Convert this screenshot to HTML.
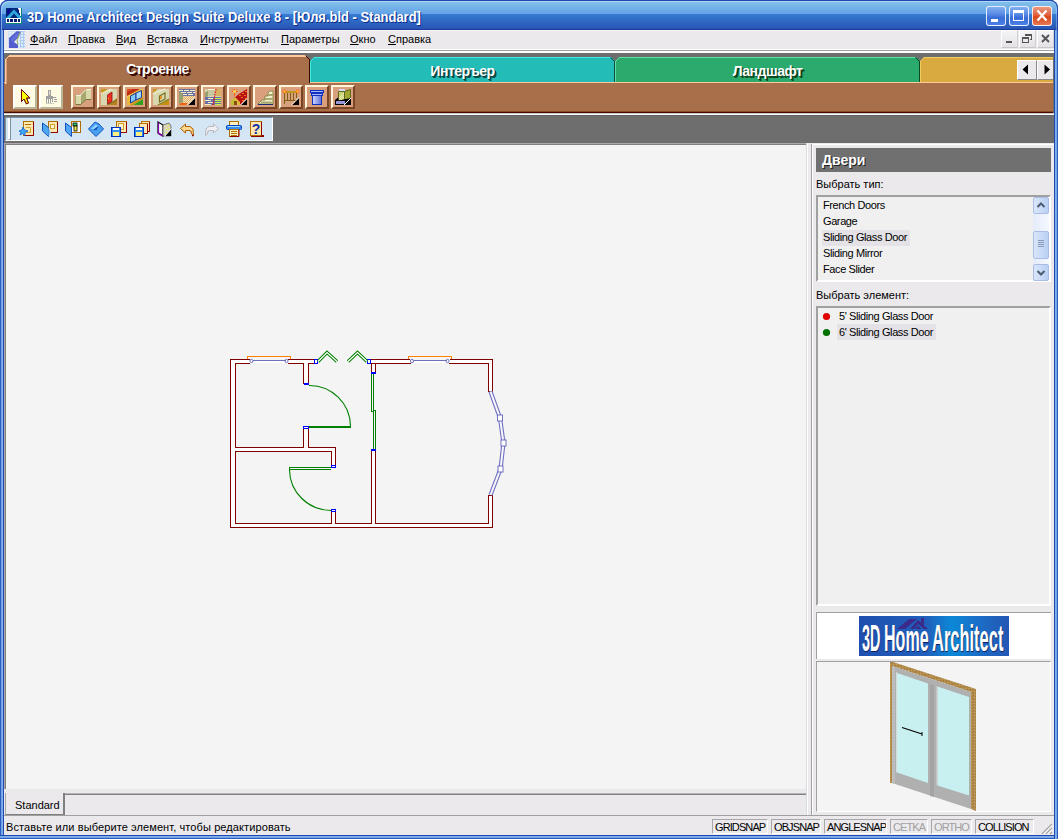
<!DOCTYPE html><html><head><meta charset="utf-8"><style>
*{margin:0;padding:0;box-sizing:border-box}
html,body{width:1058px;height:839px;overflow:hidden;background:#fff}
body{position:relative;font-family:"Liberation Sans",sans-serif;font-size:11px;color:#000;line-height:13px}
.a{position:absolute}
svg{position:absolute;overflow:visible}
.t{white-space:nowrap}
.mi u{text-decoration:underline;text-underline-offset:1px}
.wb{width:20px;height:20px;border-radius:3px;border:1px solid rgba(255,255,255,.85)}
.mdi{width:17px;height:18px;background:linear-gradient(#f4f3f5,#e4e2e6);border:1px solid #fff;border-right-color:#d2d0d4;border-bottom-color:#c8c6ca}
.tabtxt{font-size:14px;line-height:16px;letter-spacing:-0.5px;font-weight:bold;color:#fff;white-space:nowrap;text-align:center}
.bb{width:24px;height:24px;background:#d9a07e;border:2px solid;border-color:#fff5dc #7a4524 #7a4524 #fff5dc}
.bc{width:24px;height:24px;background:#fffbe2;border:2px solid;border-color:#ffffff #b8b498 #b8b498 #ffffff}
.li{left:823px;white-space:nowrap;letter-spacing:-0.4px}
.sp{height:15px;border:1px solid;border-color:#a7a6aa #fff #fff #a7a6aa;white-space:nowrap;padding-left:2px;padding-top:1px;line-height:13px;letter-spacing:-0.9px;overflow:hidden}
</style></head><body>
<div class="a" style="left:0;top:0;width:1058px;height:839px;background:#2a52be;border-radius:8px 8px 0 0"></div>
<div class="a" style="left:0;top:0;width:1058px;height:30px;border-radius:8px 8px 0 0;background:linear-gradient(to bottom,#1f3fa0 0,#1f3fa0 1px,#98ccf2 1px,#82c0ea 2px,#64a2e6 14px,#3a80d4 14px,#3579cf 15px,#2855b5 29px,#1a3a98 29px,#1a3a98 30px)"></div>
<div class="a" style="left:0;top:0;width:1058px;height:30px;border-radius:8px 8px 0 0;border:1px solid #2046b0;border-bottom:0;box-shadow:inset 1px 1px 0 rgba(200,230,255,.55), inset -1px 0 0 rgba(200,230,255,.35)"></div>
<div class="a" style="left:0;top:30px;width:4px;height:809px;background:linear-gradient(to right,#2d5bc4 0,#2d5bc4 1px,#6c9ee0 1px,#86b6ee 3px,#2148b0 3px)"></div>
<div class="a" style="left:0;top:835px;width:1058px;height:4px;background:linear-gradient(#2148b0 0,#2148b0 1px,#86b6ee 1px,#6c9ee0 3px,#2d5bc4 3px)"></div>
<svg style="left:6px;top:8px" width="16" height="16" shape-rendering="crispEdges">
<rect width="16" height="16" fill="#088878"/><rect width="15" height="15" fill="#002a78"/>
<polygon points="12,0 15,0 15,10" fill="#fff"/><rect x="12" y="0" width="3" height="3" fill="#fff"/>
<polygon points="0,10 8,1.5 16,10 12,10 8,5.5 4,10" fill="#2ca8dc" shape-rendering="auto"/>
<polygon points="1,3 5,0 2,7" fill="#0000a0" shape-rendering="auto"/>
<polygon points="11,3 13,1 13,6" fill="#001880" shape-rendering="auto"/>
<rect x="0" y="10" width="15" height="5" fill="#fff"/>
<g fill="#001a70"><rect x="1" y="11" width="2" height="3"/><rect x="4" y="11" width="3" height="3"/><rect x="8" y="11" width="3" height="3"/><rect x="12" y="11" width="2" height="3"/></g>
<rect x="0" y="15" width="16" height="1" fill="#088878"/>
</svg>
<div class="a t" style="left:27px;top:9px;font-size:14px;line-height:16px;font-weight:bold;color:#fff;text-shadow:1px 1px 0 #0c2a8a;transform:scaleX(0.925);transform-origin:0 0">3D Home Architect Design Suite Deluxe 8 - [Юля.bld - Standard]</div>
<div class="a wb" style="left:986px;top:6px;background:linear-gradient(#82aef0,#5a8ae6 40%,#3a6cd6 60%,#4a80e8)"></div>
<div class="a" style="left:991px;top:19px;width:7px;height:3px;background:#fff"></div>
<div class="a wb" style="left:1009px;top:6px;background:linear-gradient(#82aef0,#5a8ae6 40%,#3a6cd6 60%,#4a80e8)"></div>
<div class="a" style="left:1013px;top:10px;width:11px;height:11px;border:1px solid #fff;border-top-width:3px"></div>
<div class="a wb" style="left:1032px;top:6px;background:linear-gradient(#e89a80,#e06040 45%,#d84818 55%,#e87858)"></div>
<svg style="left:1032px;top:6px" width="20" height="20"><path d="M5.5 4.5 L14.5 14.5 M14.5 4.5 L5.5 14.5" stroke="#fff" stroke-width="2.2"/></svg>
<div class="a" style="left:4px;top:30px;width:1050px;height:19px;background:#ebe9ec;border-top:1px solid #f7f5f5"></div>
<div class="a" style="left:4px;top:49px;width:1050px;height:1px;background:#fff"></div>
<div class="a" style="left:4px;top:50px;width:1050px;height:1px;background:#a0a0a0"></div>
<div class="a" style="left:4px;top:51px;width:1050px;height:2px;background:#fff"></div>
<svg style="left:8px;top:31px" width="17" height="17" shape-rendering="crispEdges">
<rect width="17" height="17" fill="#dde8f6"/>
<g fill="#a8ccf4"><rect x="0" y="0" width="1" height="17"/><rect x="3" y="0" width="1" height="17"/><rect x="6" y="0" width="1" height="17"/><rect x="9" y="0" width="1" height="17"/><rect x="12" y="0" width="1" height="17"/><rect x="15" y="0" width="1" height="17"/>
<rect x="0" y="0" width="17" height="1"/><rect x="0" y="3" width="17" height="1"/><rect x="0" y="6" width="17" height="1"/><rect x="0" y="9" width="17" height="1"/><rect x="0" y="12" width="17" height="1"/><rect x="0" y="15" width="17" height="1"/></g>
<rect x="0" y="0" width="12" height="17" fill="#f0f4fc" opacity="0.5"/>
<polygon points="1,7 9,0 13,1 10,7 6,11 10,14 10,17 1,17" fill="#4850c8" opacity="0.92" shape-rendering="auto"/>
<polygon points="3,8 9,2 11,3 8,8 4,11" fill="#6a78e0" opacity="0.8" shape-rendering="auto"/>
<polygon points="6,11 10,7 11,13" fill="#e8ecff" shape-rendering="auto"/>
<path d="M12.5 0.5 L9 9 L10 14" stroke="#98b060" stroke-width="1" fill="none" shape-rendering="auto"/>
</svg>
<div class="a t mi" style="left:30px;top:33px"><u>Ф</u>айл</div>
<div class="a t mi" style="left:68px;top:33px"><u>П</u>равка</div>
<div class="a t mi" style="left:116px;top:33px"><u>В</u>ид</div>
<div class="a t mi" style="left:147px;top:33px"><u>В</u>ставка</div>
<div class="a t mi" style="left:200px;top:33px"><u>И</u>нструменты</div>
<div class="a t mi" style="left:281px;top:33px"><u>П</u>араметры</div>
<div class="a t mi" style="left:350px;top:33px"><u>О</u>кно</div>
<div class="a t mi" style="left:388px;top:33px"><u>С</u>правка</div>
<div class="a mdi" style="left:1001px;top:30px"></div><div class="a" style="left:1006px;top:41px;width:6px;height:2px;background:#555"></div>
<div class="a mdi" style="left:1019px;top:30px"></div>
<svg style="left:1019px;top:30px" width="17" height="18" shape-rendering="crispEdges"><path d="M6.5 4.5h6v5h-2 M6.5 4.5v1.5 M3.5 7.5h6v5h-6z" stroke="#555" fill="none"/><rect x="6" y="4" width="7" height="2" fill="#555"/><rect x="3" y="7" width="7" height="2" fill="#555"/></svg>
<div class="a mdi" style="left:1037px;top:30px"></div>
<svg style="left:1037px;top:30px" width="17" height="18"><path d="M5 5 L12 12 M12 5 L5 12" stroke="#555" stroke-width="2"/></svg>
<div class="a" style="left:4px;top:53px;width:1050px;height:90px;background:#6e6e6e"></div>
<div class="a" style="left:4px;top:82px;width:1049px;height:31px;background:#a8704a;border-top:1px solid #ffc89a"></div>
<div class="a" style="left:4px;top:111px;width:1049px;height:1px;background:#8a4a20"></div>
<div class="a" style="left:4px;top:112px;width:1049px;height:1px;background:#4a0a00"></div>
<svg style="left:310px;top:57px" width="305" height="25" shape-rendering="crispEdges"><polygon points="0,4 4,0 301,0 305,4 305,25 0,25" fill="#24bcb6" shape-rendering="auto"/><rect x="4" y="0" width="297" height="1" fill="#40e8e4"/><rect x="0" y="4" width="1" height="21" fill="#40e8e4"/><path d="M0.5 4.5 L4.5 0.5" stroke="#40e8e4" shape-rendering="auto"/><rect x="304" y="4" width="1" height="21" fill="#0a4a48"/><path d="M300.5 0.5 L304.5 4.5" stroke="#0a4a48" shape-rendering="auto"/></svg>
<div class="a tabtxt" style="left:310px;top:63px;width:305px;text-shadow:1px 1px 0 #0a4a48,2px 2px 0 #0a4a48">Интеръер</div>
<svg style="left:615px;top:57px" width="305" height="25" shape-rendering="crispEdges"><polygon points="0,4 4,0 301,0 305,4 305,25 0,25" fill="#2aaa6c" shape-rendering="auto"/><rect x="4" y="0" width="297" height="1" fill="#60e0a0"/><rect x="0" y="4" width="1" height="21" fill="#60e0a0"/><path d="M0.5 4.5 L4.5 0.5" stroke="#60e0a0" shape-rendering="auto"/><rect x="304" y="4" width="1" height="21" fill="#0a4a20"/><path d="M300.5 0.5 L304.5 4.5" stroke="#0a4a20" shape-rendering="auto"/></svg>
<div class="a tabtxt" style="left:615px;top:63px;width:305px;text-shadow:1px 1px 0 #0a4a20,2px 2px 0 #0a4a20">Ландшафт</div>
<svg style="left:920px;top:57px" width="142" height="25" shape-rendering="crispEdges"><polygon points="0,4 4,0 138,0 142,4 142,25 0,25" fill="#d8aa40" shape-rendering="auto"/><rect x="4" y="0" width="134" height="1" fill="#f0cc60"/><rect x="0" y="4" width="1" height="21" fill="#f0cc60"/><path d="M0.5 4.5 L4.5 0.5" stroke="#f0cc60" shape-rendering="auto"/><rect x="141" y="4" width="1" height="21" fill="#7a5a10"/><path d="M137.5 0.5 L141.5 4.5" stroke="#7a5a10" shape-rendering="auto"/></svg>
<div class="a tabtxt" style="left:920px;top:63px;width:142px;text-shadow:1px 1px 0 #7a5a10,2px 2px 0 #7a5a10"></div>
<svg style="left:5px;top:55px" width="306" height="29" shape-rendering="crispEdges">
<polygon points="0,4 4,0 301,0 305,4 305,29 0,29" fill="#a8704a" shape-rendering="auto"/>
<rect x="4" y="0" width="297" height="2" fill="#ffc89a"/>
<rect x="0" y="4" width="2" height="25" fill="#ffc89a"/><rect x="1" y="4" width="1" height="25" fill="#d8a078"/>
<path d="M0.5 4.5 L4.5 0.5" stroke="#ffc89a" shape-rendering="auto"/>
<rect x="304" y="4" width="1" height="24" fill="#3a0a00"/>
<path d="M300.5 0.5 L304.5 4.5" stroke="#3a0a00" shape-rendering="auto"/>
</svg>
<div class="a tabtxt" style="left:5px;top:61px;width:305px;text-shadow:1px 1px 0 #3a0800,2px 2px 0 #3a0800">Строение</div>
<div class="a" style="left:1017px;top:60px;width:20px;height:20px;background:#ebe9ec;border:1px solid;border-color:#fff #888 #888 #fff"></div>
<svg style="left:1017px;top:60px" width="20" height="20"><polygon points="11,4.5 11,14.5 5.5,9.5" fill="#000"/></svg>
<div class="a" style="left:1037px;top:60px;width:17px;height:20px;background:#ebe9ec;border:1px solid;border-color:#fff #888 #888 #fff"></div>
<svg style="left:1037px;top:60px" width="17" height="20"><polygon points="7.5,4.5 7.5,14.5 13,9.5" fill="#000"/></svg>
<div class="a" style="left:1053px;top:53px;width:1px;height:90px;background:#6e6e6e"></div>
<div class="a bc" style="left:13px;top:85px"></div>
<div class="a bc" style="left:39px;top:85px"></div>
<div class="a bb" style="left:71px;top:85px"></div>
<div class="a bb" style="left:97px;top:85px"></div>
<div class="a bb" style="left:123px;top:85px"></div>
<div class="a bb" style="left:149px;top:85px"></div>
<div class="a bb" style="left:175px;top:85px"></div>
<div class="a bb" style="left:201px;top:85px"></div>
<div class="a bb" style="left:227px;top:85px"></div>
<div class="a bb" style="left:253px;top:85px"></div>
<div class="a bb" style="left:279px;top:85px"></div>
<div class="a bb" style="left:305px;top:85px"></div>
<div class="a bb" style="left:331px;top:85px"></div>
<svg width="0" height="0" style="position:absolute"><defs><pattern id="chk" width="2" height="2" patternUnits="userSpaceOnUse"><rect width="1" height="1" fill="#fff"/><rect x="1" y="1" width="1" height="1" fill="#fff"/></pattern></defs></svg>
<svg style="left:17px;top:89px" width="16" height="16"><polygon points="4.5,0.5 4.5,12.5 7,10 9.5,15 11.5,14 9.5,9 13,9" fill="#ffff00" stroke="#000" stroke-width="1"/>
<polygon points="4.5,0.5 4.5,12.5 7,10 9.5,15 11.5,14 9.5,9 13,9" fill="none" stroke="#e00000" stroke-width="1" stroke-dasharray="1 1"/></svg>
<svg style="left:43px;top:89px" width="16" height="16"><g fill="#a0a0a0" shape-rendering="crispEdges">
<rect x="5" y="1" width="3" height="6"/><rect x="3" y="7" width="7" height="3"/><rect x="3" y="10" width="1" height="4"/><rect x="5" y="10" width="1" height="4"/><rect x="7" y="10" width="1" height="4"/><rect x="9" y="10" width="1" height="3"/>
<rect x="10" y="8" width="3" height="1"/><rect x="11" y="10" width="3" height="1"/><rect x="11" y="12" width="3" height="1"/><rect x="3" y="14" width="8" height="1" fill="#d0d0c8"/></g>
<rect x="6" y="2" width="1" height="4" fill="#e0e0d8"/></svg>
<svg style="left:75px;top:89px" width="16" height="16"><g shape-rendering="crispEdges">
<polygon points="5,6 11,0 11,10 5,16" fill="#a8a870"/>
<rect x="0" y="6" width="6" height="10" fill="#d8d8a8"/>
<rect x="11" y="0" width="5" height="11" fill="#d8d8a8"/>
<rect x="0" y="15" width="6" height="1" fill="#787840"/><rect x="0" y="6" width="1" height="10" fill="#a0a070"/>
<rect x="11" y="10" width="5" height="1" fill="#787840"/>
<rect x="1" y="6" width="5" height="1" fill="#f4f4d8"/><rect x="12" y="0" width="4" height="1" fill="#f4f4d8"/>
</g><path d="M5.5 6 L11 0.5" stroke="#f4f4d8" stroke-width="1"/><path d="M5.5 15.5 L11 10.5" stroke="#787840" stroke-width="1"/></svg>
<svg style="left:101px;top:89px" width="16" height="16"><rect width="16" height="16" fill="#d8d8b0"/>
<polygon points="0,0 7,0 0,5" fill="#c89820"/><polygon points="16,9 16,16 7,16" fill="#b88018"/>
<path d="M0 4.5 L11 0" stroke="#f4f4d8" stroke-width="1.4" stroke-dasharray="1.2 0.8"/>
<path d="M6 16 L16 11" stroke="#707030" stroke-width="1"/>
<polygon points="6.5,6 11,3 11,12.5 6.5,15" fill="#f03020" stroke="#901010" stroke-width="0.8"/>
<rect x="7" y="9" width="1" height="1" fill="#f0d000"/></svg>
<svg style="left:127px;top:89px" width="16" height="16"><rect width="16" height="16" fill="#e8b838"/>
<polygon points="0,0 13,0 0,7" fill="#c03010"/><polygon points="0,0 6,0 0,3" fill="#e05020"/>
<polygon points="16,10 16,16 6,16" fill="#30a020"/>
<path d="M0 8 L16 0" stroke="#f8e070" stroke-width="1.2" stroke-dasharray="1 1"/>
<path d="M4 16 L16 9" stroke="#c88810" stroke-width="1.2"/>
<polygon points="3.5,7 9,4 9,11 3.5,14" fill="#80c8f8" stroke="#203890" stroke-width="1"/>
<polygon points="9,4 14.5,1.5 14.5,8.5 9,11" fill="#a0d8ff" stroke="#203890" stroke-width="1"/></svg>
<svg style="left:153px;top:89px" width="16" height="16"><rect width="16" height="16" fill="#d8d8b0"/>
<polygon points="0,0 5,0 0,4" fill="#c89820"/><polygon points="16,10 16,16 6,16" fill="#c89010"/>
<path d="M0 5 L12 0" stroke="#f4f4d8" stroke-width="1.4" stroke-dasharray="1.2 0.8"/>
<path d="M5 16 L16 10" stroke="#808030" stroke-width="1.2"/>
<polygon points="6.5,7 12,4 12,10 6.5,13" fill="none" stroke="#787020" stroke-width="1.2"/>
<rect x="7" y="7" width="2" height="3" fill="#e89020"/></svg>
<svg style="left:179px;top:89px" width="16" height="16"><rect width="16" height="16" fill="#d8a880"/>
<rect x="0" y="0" width="16" height="7" fill="#6870a8"/>
<g fill="#f8f0c0" shape-rendering="crispEdges"><rect x="0" y="1" width="4" height="1"/><rect x="5" y="1" width="5" height="1"/><rect x="11" y="1" width="5" height="1"/>
<rect x="2" y="3" width="5" height="1"/><rect x="8" y="3" width="5" height="1"/><rect x="14" y="3" width="2" height="1"/>
<rect x="4" y="5" width="4" height="1"/><rect x="9" y="5" width="5" height="1"/></g>
<polygon points="0,2 4,5 4,13 0,15" fill="#98a070"/>
<polygon points="4,7 16,7 16,10 9,15 4,15" fill="#e0b060"/>
<rect x="4" y="7" width="12" height="8" fill="url(#chk)" opacity="0.6"/>
<polygon points="0,16 2,14 9,14 7,16" fill="#f06010"/>
<polygon points="16,9 16,16 9,16" fill="#000"/><path d="M8.5 16 L16 8.5" stroke="#fff" stroke-width="0.9"/></svg>
<svg style="left:205px;top:89px" width="16" height="16"><rect width="16" height="16" fill="#d8d8b0"/>
<polygon points="0,3 3,0 11,0 11,7 3,7 0,10" fill="#c8c8a0"/>
<polygon points="0,3 3,0 3,7 0,10" fill="#98a070"/>
<path d="M0.5 3 L3 0.5 H11" stroke="#f8f8e0" stroke-width="1" fill="none"/>
<rect x="11" y="0" width="5" height="7" fill="#d8b060"/>
<rect x="0" y="8" width="10" height="8" fill="#6870a8"/>
<g fill="#f8f0c0" shape-rendering="crispEdges"><rect x="3" y="9" width="5" height="1"/><rect x="0" y="11" width="6" height="1"/><rect x="3" y="13" width="5" height="1"/><rect x="0" y="15" width="6" height="1"/></g>
<rect x="10" y="8" width="6" height="8" fill="#6870a8"/>
<g fill="#c8f040" shape-rendering="crispEdges"><rect x="10" y="9" width="6" height="1"/><rect x="10" y="11" width="6" height="1"/><rect x="10" y="13" width="6" height="1"/><rect x="10" y="15" width="6" height="1"/></g>
<path d="M11 0 L8 16" stroke="#f01010" stroke-width="1.3" stroke-dasharray="1.5 1"/></svg>
<svg style="left:231px;top:89px" width="16" height="16"><polygon points="16,0 16,9 9,16 3,16 3,9 8,5" fill="#b81010"/>
<g fill="#f07818"><rect x="8" y="6" width="2" height="1"/><rect x="11" y="4" width="2" height="1"/><rect x="14" y="2" width="2" height="1"/><rect x="10" y="8" width="2" height="1"/><rect x="13" y="6" width="2" height="1"/><rect x="11" y="11" width="2" height="1"/><rect x="14" y="9" width="2" height="1"/></g>
<polygon points="0,16 0,12 4,8 9,13 9,16" fill="#e0b840"/><polygon points="0,16 0,13 4,9 4,16" fill="#b8c030"/>
<rect x="3" y="12" width="3" height="4" fill="#8a5010"/>
<polygon points="16,10 16,16 10,16" fill="#000"/><path d="M9.5 16 L16 9.5" stroke="#fff" stroke-width="0.9"/>
<circle cx="3.5" cy="2.5" r="1.3" fill="#ffe040"/>
<path d="M3.5 0 V1 M1 2.5 H2 M5 2.5 H7 M3.5 4 V7 M1.5 0.5 L2.3 1.3 M5.5 0.5 L4.7 1.3" stroke="#ff6000" stroke-width="0.9"/></svg>
<svg style="left:257px;top:89px" width="16" height="16"><polygon points="1,15 5,11 8,11 8,7 11,7 11,4 13,2 16,2 16,15" fill="#f0f0c8" stroke="#787838" stroke-width="0.8"/>
<g fill="#a8a870"><rect x="11" y="5" width="5" height="2"/><rect x="8" y="9" width="8" height="2"/><rect x="4" y="12.5" width="12" height="2"/></g>
<rect x="1" y="15" width="15" height="1" fill="#202878"/></svg>
<svg style="left:283px;top:89px" width="16" height="16"><g fill="#806010" shape-rendering="crispEdges">
<rect x="2" y="2" width="12" height="2" fill="#c09820"/><rect x="1" y="4" width="1" height="11"/><rect x="4" y="4" width="1" height="8"/><rect x="7" y="4" width="1" height="8"/><rect x="10" y="4" width="1" height="8"/><rect x="13" y="4" width="1" height="5"/>
<rect x="1" y="11" width="12" height="1"/></g>
<circle cx="1.5" cy="2.5" r="1.5" fill="#ffd040" stroke="#ff5000" stroke-width="0.8"/>
<circle cx="14.5" cy="2.5" r="1.5" fill="#ffd040" stroke="#ff5000" stroke-width="0.8"/>
<polygon points="16,9 16,16 9,16" fill="#000"/><path d="M8.5 16 L16 8.5" stroke="#fff" stroke-width="0.9"/></svg>
<svg style="left:309px;top:89px" width="16" height="16"><rect x="1.5" y="1.5" width="13" height="2" fill="#a8b8f8" stroke="#1030c0" stroke-width="1"/>
<rect x="2.5" y="4.5" width="11" height="2" fill="#a8b8f8" stroke="#1030c0" stroke-width="1"/>
<defs><linearGradient id="colg"><stop offset="0" stop-color="#d0d8ff"/><stop offset="1" stop-color="#6070d8"/></linearGradient></defs>
<rect x="3.5" y="6.5" width="9" height="9" fill="url(#colg)" stroke="#1030c0" stroke-width="1"/></svg>
<svg style="left:335px;top:89px" width="16" height="16"><rect x="4" y="0" width="6" height="2" fill="#d8d8f8"/>
<polygon points="3.5,2.5 9.5,2.5 9.5,11.5 3.5,11.5" fill="#c8d070" stroke="#606820" stroke-width="1"/>
<path d="M4 9 L9 4 M4 11 L9 6 M6 11 L9 8" stroke="#f0f0c8" stroke-width="0.9"/>
<polygon points="9.5,2.5 15.5,0.5 15.5,9.5 9.5,11.5" fill="#a0a830" stroke="#606820" stroke-width="1"/>
<polygon points="0,11 3,8.5 3.5,11.5 16,9 16,16 0,16" fill="#000"/>
<rect x="1" y="12" width="9" height="3" fill="#9898d8"/>
<path d="M9 16 L16 9" stroke="#fff" stroke-width="1"/></svg>
<div class="a" style="left:4px;top:113px;width:1050px;height:1px;background:#c8c8c8"></div><div class="a" style="left:4px;top:114px;width:1050px;height:1px;background:#fff"></div><div class="a" style="left:4px;top:115px;width:1050px;height:1px;background:#626262"></div>
<div class="a" style="left:5px;top:117px;width:268px;height:24px;background:#d4e6f4;border-top:1px solid #7890a0;border-left:1px solid #7890a0;border-right:1px solid #fff;border-bottom:1px solid #fff"></div>
<div class="a" style="left:8px;top:118px;width:3px;height:22px;border-left:2px solid #fff;border-bottom:1px solid #7890a0;border-right:1px solid #7890a0"></div>
<svg style="left:19px;top:121px" width="16" height="16"><rect x="4.5" y="0.5" width="10" height="14" fill="#ffe8b0" stroke="#b07000" stroke-width="1"/><path d="M14.5 1 V14.5 H5" stroke="#900000" stroke-width="1" fill="none"/><rect x="6" y="3" width="6" height="1" fill="#b07000"/><path d="M7 6.5 H11.5 V11.5 H7" stroke="#d0a030" fill="none"/><polygon points="0,10 3,9 4,6 5.5,9 9,10 6,11.5 6,15 3.5,12.5 1,14 2,11.5" fill="#40a8f8" stroke="#1060d0" stroke-width="0.8"/></svg>
<svg style="left:42px;top:121px" width="16" height="16"><rect x="6.5" y="0.5" width="9" height="11" fill="#ffe8b0" stroke="#b07000" stroke-width="1"/><path d="M15.5 1 V11.5 H7" stroke="#900000" stroke-width="1" fill="none"/><rect x="8.5" y="3.5" width="4" height="4" fill="#fff4d0" stroke="#d0a030"/><polygon points="0.5,2 6.5,6.5 6.5,15.5 0.5,10" fill="#50a8f0" stroke="#1050c0" stroke-width="1"/><polygon points="6.5,6.5 9,11.5 6.5,15.5" fill="#80c8f8"/></svg>
<svg style="left:65px;top:121px" width="16" height="16"><rect x="6.5" y="0.5" width="9" height="11" fill="#fff" stroke="#b07000"/><rect x="8" y="2" width="4" height="3" fill="#30d070" stroke="#000" stroke-width="0.8"/><rect x="9" y="5" width="3" height="5" fill="#f0f040" stroke="#000" stroke-width="0.8"/><polygon points="0.5,2 6.5,6.5 6.5,15.5 0.5,10" fill="#50a8f0" stroke="#1050c0" stroke-width="1"/></svg>
<svg style="left:88px;top:121px" width="16" height="16"><polygon points="0.5,8 7,1 11,3 15.5,8 8,15.5" fill="#48a0f0" stroke="#1050c0" stroke-width="1"/><polygon points="3,8 7.5,3.5 10,5 7,8" fill="#90d0ff"/><path d="M6 9 L10 6" stroke="#1050c0" stroke-width="1.2"/><circle cx="8" cy="8" r="1" fill="#1050c0"/></svg>
<svg style="left:111px;top:121px" width="16" height="16"><rect x="5.5" y="0.5" width="10" height="11" fill="#ffe8b0" stroke="#b07000" stroke-width="1"/><path d="M15.5 1 V11.5 H6" stroke="#900000" stroke-width="1" fill="none"/><rect x="7.5" y="2.5" width="5" height="6" fill="#fff4d0" stroke="#d0a030"/><rect x="0.5" y="6.5" width="9" height="9" fill="#3090f0" stroke="#0030c0" stroke-width="1"/><rect x="2" y="7" width="6" height="2" fill="#fff"/><rect x="2" y="11" width="6" height="4" fill="#fff080"/></svg>
<svg style="left:134px;top:121px" width="16" height="16"><rect x="7.5" y="0.5" width="8" height="10" fill="#ffe8b0" stroke="#b07000" stroke-width="1"/><path d="M15.5 1 V10.5 H8" stroke="#900000" stroke-width="1" fill="none"/><rect x="5.5" y="2.5" width="8" height="10" fill="#ffe8b0" stroke="#b07000" stroke-width="1"/><path d="M13.5 3 V12.5 H6" stroke="#900000" stroke-width="1" fill="none"/><rect x="0.5" y="6.5" width="9" height="9" fill="#3090f0" stroke="#0030c0" stroke-width="1"/><rect x="2" y="7" width="6" height="2" fill="#fff"/><rect x="2" y="11" width="6" height="4" fill="#fff080"/></svg>
<svg style="left:157px;top:121px" width="16" height="16"><polygon points="1,1 6,4 6,15 1,12" fill="#fff" stroke="#000" stroke-width="1.2"/><path d="M1 12 L6 15" stroke="#8000a0" stroke-width="1.5"/><path d="M1.5 1.5 V12" stroke="#8000a0" stroke-width="1.2"/><polygon points="6,4 12,2 14,5 14,15 6,15" fill="#d8d8c0" stroke="#606060" stroke-width="0.8"/><g fill="#f0f000"><rect x="9" y="5" width="1" height="1"/><rect x="11" y="4" width="1" height="1"/><rect x="9" y="8" width="1" height="1"/><rect x="11" y="7" width="1" height="1"/><rect x="9" y="11" width="1" height="1"/></g><polygon points="14,8 14,15 8,15" fill="#000"/><path d="M7.5 15.5 L14.5 7.5" stroke="#fff" stroke-width="0.9"/></svg>
<svg style="left:180px;top:121px" width="16" height="16"><polygon points="0.5,7.5 5.5,3 5.5,5.5 10,5.5 13,8 13.5,14.5 11.5,13 11,10 9,9.5 5.5,9.5 5.5,12" fill="#ffd890" stroke="#b06000" stroke-width="1"/><path d="M12 14.5 L13.5 14.5" stroke="#900000" stroke-width="1.5"/></svg>
<svg style="left:203px;top:121px" width="16" height="16"><polygon points="15.5,7.5 10.5,3 10.5,5.5 6,5.5 3,8 2.5,14.5 4.5,13 5,10 7,9.5 10.5,9.5 10.5,12" fill="#f0f0f4" stroke="#b8b8bc" stroke-width="1"/></svg>
<svg style="left:226px;top:121px" width="16" height="16"><rect x="3.5" y="0.5" width="9" height="4" fill="#fff0c0" stroke="#b07000"/><rect x="0.5" y="4.5" width="15" height="4" rx="1" fill="#3890f0" stroke="#0040c0"/><rect x="2" y="5" width="12" height="1" fill="#a0d8ff"/><rect x="3.5" y="8.5" width="9" height="7" fill="#fff0c0" stroke="#b07000"/><path d="M5 10.5 H11 M5 12.5 H11 M5 14.5 H11" stroke="#b07000" stroke-width="1"/><path d="M4 15.5 H13 V9" stroke="#900000" fill="none"/></svg>
<svg style="left:249px;top:121px" width="16" height="16"><rect x="1.5" y="0.5" width="11" height="14" fill="#ffe8b0" stroke="#b07000"/><path d="M12.5 1 V14.5 H15 M2 15.5 H15" stroke="#900000" fill="none"/><text x="7" y="12.5" font-family="Liberation Sans" font-weight="bold" font-size="14" fill="#1030a8" text-anchor="middle">?</text></svg>
<div class="a" style="left:4px;top:143px;width:803px;height:646px;background:#f4f4f4;border-left:1px solid #aca8ac;border-top:1px solid #aca8ac"></div>
<div class="a" style="left:5px;top:144px;width:801px;height:1px;background:#808080"></div>
<div class="a" style="left:5px;top:144px;width:1px;height:645px;background:#808080"></div>
<svg class="a" style="left:0;top:0" width="1058" height="839"><g shape-rendering="crispEdges"><rect x="231" y="360" width="87" height="3" fill="#ffffff"/><rect x="367" y="360" width="125" height="3" fill="#ffffff"/><rect x="231" y="360" width="4" height="167" fill="#ffffff"/><rect x="231" y="524" width="261" height="3" fill="#ffffff"/><rect x="489" y="360" width="3" height="31" fill="#ffffff"/><rect x="489" y="496" width="3" height="31" fill="#ffffff"/><rect x="304" y="364" width="4" height="19" fill="#ffffff"/><rect x="304" y="428" width="4" height="19" fill="#ffffff"/><rect x="236" y="448" width="99" height="3" fill="#ffffff"/><rect x="332" y="448" width="3" height="17" fill="#ffffff"/><rect x="332" y="512" width="3" height="11" fill="#ffffff"/><rect x="372" y="364" width="3" height="8" fill="#ffffff"/><rect x="372" y="451" width="3" height="72" fill="#ffffff"/><rect x="230" y="359" width="1" height="169" fill="#800000"/><rect x="230" y="359" width="20" height="1" fill="#800000"/><rect x="288" y="359" width="26" height="1" fill="#800000"/><rect x="371" y="359" width="39" height="1" fill="#800000"/><rect x="450" y="359" width="43" height="1" fill="#800000"/><rect x="492" y="359" width="1" height="33" fill="#800000"/><rect x="492" y="495" width="1" height="33" fill="#800000"/><rect x="230" y="527" width="263" height="1" fill="#800000"/><rect x="235" y="363" width="15" height="1" fill="#800000"/><rect x="288" y="363" width="16" height="1" fill="#800000"/><rect x="308" y="363" width="6" height="1" fill="#800000"/><rect x="375" y="363" width="36" height="1" fill="#800000"/><rect x="449" y="363" width="40" height="1" fill="#800000"/><rect x="235" y="363" width="1" height="85" fill="#800000"/><rect x="235" y="451" width="1" height="73" fill="#800000"/><rect x="488" y="363" width="1" height="29" fill="#800000"/><rect x="488" y="495" width="1" height="29" fill="#800000"/><rect x="488" y="391" width="5" height="1" fill="#800000"/><rect x="488" y="495" width="5" height="1" fill="#800000"/><rect x="303" y="363" width="1" height="21" fill="#800000"/><rect x="308" y="363" width="1" height="21" fill="#800000"/><rect x="303" y="428" width="1" height="20" fill="#800000"/><rect x="308" y="428" width="1" height="20" fill="#800000"/><rect x="235" y="447" width="69" height="1" fill="#800000"/><rect x="308" y="447" width="28" height="1" fill="#800000"/><rect x="235" y="451" width="97" height="1" fill="#800000"/><rect x="331" y="451" width="1" height="15" fill="#800000"/><rect x="335" y="447" width="1" height="19" fill="#800000"/><rect x="331" y="511" width="1" height="13" fill="#800000"/><rect x="335" y="511" width="1" height="13" fill="#800000"/><rect x="235" y="523" width="97" height="1" fill="#800000"/><rect x="335" y="523" width="37" height="1" fill="#800000"/><rect x="375" y="523" width="114" height="1" fill="#800000"/><rect x="371" y="363" width="1" height="10" fill="#800000"/><rect x="375" y="363" width="1" height="10" fill="#800000"/><rect x="371" y="363" width="5" height="1" fill="#800000"/><rect x="371" y="451" width="1" height="73" fill="#800000"/><rect x="375" y="451" width="1" height="73" fill="#800000"/><rect x="314" y="359" width="4" height="1" fill="#0000ff"/><rect x="314" y="363" width="4" height="1" fill="#0000ff"/><rect x="314" y="359" width="1" height="5" fill="#0000ff"/><rect x="317" y="359" width="1" height="5" fill="#0000ff"/><rect x="367" y="359" width="4" height="1" fill="#0000ff"/><rect x="367" y="363" width="4" height="1" fill="#0000ff"/><rect x="367" y="359" width="1" height="5" fill="#0000ff"/><rect x="370" y="359" width="1" height="5" fill="#0000ff"/><rect x="304" y="383" width="5" height="2" fill="#0000ff"/><rect x="303" y="426" width="6" height="1" fill="#0000ff"/><rect x="303" y="428" width="6" height="1" fill="#0000ff"/><rect x="303" y="426" width="1" height="3" fill="#0000ff"/><rect x="308" y="426" width="1" height="3" fill="#0000ff"/><rect x="371" y="372" width="5" height="2" fill="#0000ff"/><rect x="371" y="449" width="5" height="2" fill="#0000ff"/><rect x="331" y="465" width="5" height="1" fill="#0000ff"/><rect x="331" y="467" width="5" height="1" fill="#0000ff"/><rect x="331" y="465" width="1" height="3" fill="#0000ff"/><rect x="335" y="465" width="1" height="3" fill="#0000ff"/><rect x="331" y="509" width="5" height="1" fill="#0000ff"/><rect x="331" y="511" width="5" height="1" fill="#0000ff"/><rect x="331" y="509" width="1" height="3" fill="#0000ff"/><rect x="335" y="509" width="1" height="3" fill="#0000ff"/><rect x="247" y="356" width="44" height="1" fill="#ff8000"/><rect x="247" y="356" width="1" height="3" fill="#ff8000"/><rect x="290" y="356" width="1" height="3" fill="#ff8000"/><rect x="253" y="360" width="33" height="1" fill="#7070c0"/><rect x="408" y="356" width="44" height="1" fill="#ff8000"/><rect x="408" y="356" width="1" height="3" fill="#ff8000"/><rect x="451" y="356" width="1" height="3" fill="#ff8000"/><rect x="414" y="360" width="33" height="1" fill="#7070c0"/></g><circle cx="251.5" cy="361" r="1.6" fill="none" stroke="#7070c0" stroke-width="1"/><circle cx="286.5" cy="361" r="1.6" fill="none" stroke="#7070c0" stroke-width="1"/><circle cx="412" cy="361" r="1.6" fill="none" stroke="#7070c0" stroke-width="1"/><circle cx="447.5" cy="361" r="1.6" fill="none" stroke="#7070c0" stroke-width="1"/><polyline points="318,361.5 327,352.5 337,361.5" fill="none" stroke="#008000" stroke-width="3.2" stroke-linejoin="miter"/><polyline points="318,361.5 327,352.5 337,361.5" fill="none" stroke="#ffffff" stroke-width="1.2" stroke-linejoin="miter"/><polyline points="348,361.5 357.5,352.5 367,361.5" fill="none" stroke="#008000" stroke-width="3.2" stroke-linejoin="miter"/><polyline points="348,361.5 357.5,352.5 367,361.5" fill="none" stroke="#ffffff" stroke-width="1.2" stroke-linejoin="miter"/><g shape-rendering="crispEdges" fill="#008000"><rect x="371" y="374" width="1" height="38"/><rect x="373" y="374" width="1" height="75"/><rect x="371" y="411" width="3" height="1"/><rect x="373" y="410" width="3" height="1"/><rect x="375" y="410" width="1" height="39"/></g><rect x="309" y="426" width="42" height="2" fill="#008000"/><path d="M309 385.5 A41 41 0 0 1 350.5 426" fill="none" stroke="#008000" stroke-width="1.1"/><path d="M289 467.5 H331 M289 469.5 H331 M289.5 467 V471" fill="none" stroke="#008000" stroke-width="1"/><path d="M289.5 470 A42 41 0 0 0 331 510.5" fill="none" stroke="#008000" stroke-width="1.1"/><polyline points="490.5,391.5 500,418 503.5,443 500.5,469 490.5,495" fill="none" stroke="#7070c0" stroke-width="4.2"/><polyline points="490.5,391.5 500,418 503.5,443 500.5,469 490.5,495" fill="none" stroke="#f8f8fc" stroke-width="2"/><rect x="497.5" y="415" width="5" height="6" fill="#fff" stroke="#7070c0" stroke-width="1"/><rect x="501.0" y="440" width="5" height="6" fill="#fff" stroke="#7070c0" stroke-width="1"/><rect x="498.0" y="466" width="5" height="6" fill="#fff" stroke="#7070c0" stroke-width="1"/></svg>
<div class="a" style="left:4px;top:789px;width:803px;height:26px;background:#ebe9ec"></div>
<div class="a" style="left:64px;top:793px;width:742px;height:1px;background:#b4b4b8"></div><div class="a" style="left:64px;top:794px;width:742px;height:1px;background:#808080"></div>
<div class="a t" style="left:5px;top:793px;width:60px;height:22px;background:#ebe9ec;border-right:2px solid #808080;border-bottom:1px solid #808080;border-left:1px solid #aaa;box-shadow:0 1px 0 #b8b8bc;padding:6px 0 0 9px">Standard</div>
<div class="a" style="left:806px;top:143px;width:248px;height:672px;background:#ebe9ec"></div>
<div class="a" style="left:806px;top:144px;width:1px;height:671px;background:#d8dce0"></div>
<div class="a" style="left:807px;top:144px;width:1px;height:671px;background:#fff"></div>
<div class="a" style="left:811px;top:144px;width:1px;height:671px;background:#a0a0a8"></div>
<div class="a" style="left:812px;top:144px;width:242px;height:1px;background:#fff"></div>
<div class="a" style="left:812px;top:144px;width:1px;height:671px;background:#fff"></div>
<div class="a" style="left:816px;top:148px;width:235px;height:24px;background:#707070"></div>
<div class="a t" style="left:822px;top:152px;font-size:14px;font-weight:bold;color:#fff;text-shadow:1px 1px 0 #202020;line-height:16px">Двери</div>
<div class="a t" style="left:816px;top:178px">Выбрать тип:</div>
<div class="a" style="left:816px;top:195px;width:235px;height:87px;background:#f0f0f0;border:2px solid;border-color:#a0a0a0 #fff #fff #a0a0a0"></div>
<div class="a t li" style="top:199px">French Doors</div>
<div class="a t li" style="top:215px">Garage</div>
<div class="a" style="left:822px;top:230px;width:88px;height:16px;background:#e4e2e6"></div>
<div class="a t li" style="top:231px">Sliding Glass Door</div>
<div class="a t li" style="top:247px">Sliding Mirror</div>
<div class="a t li" style="top:263px">Face Slider</div>
<div class="a" style="left:1033px;top:197px;width:16px;height:84px;background:linear-gradient(to right,#e4ecfa,#f4f8fe)"></div>
<div class="a" style="left:1033px;top:197px;width:16px;height:17px;border:1px solid #a8bce4;border-radius:2px;background:linear-gradient(to right,#dae6fa,#b8d0f4)"></div>
<svg style="left:1033px;top:197px" width="16" height="17"><path d="M4.5 10 L8 6.5 L11.5 10" stroke="#4d5b70" stroke-width="2" fill="none"/></svg>
<div class="a" style="left:1033px;top:231px;width:16px;height:28px;border:1px solid #a8bce4;border-radius:2px;background:linear-gradient(to right,#dae6fa,#b8d0f4)"></div>
<div class="a" style="left:1038px;top:240px;width:6px;height:8px;background:repeating-linear-gradient(#8898b8 0,#8898b8 1px,transparent 1px,transparent 2px)"></div>
<div class="a" style="left:1033px;top:264px;width:16px;height:17px;border:1px solid #a8bce4;border-radius:2px;background:linear-gradient(to right,#dae6fa,#b8d0f4)"></div>
<svg style="left:1033px;top:264px" width="16" height="17"><path d="M4.5 7 L8 10.5 L11.5 7" stroke="#4d5b70" stroke-width="2" fill="none"/></svg>
<div class="a t" style="left:816px;top:289px">Выбрать элемент:</div>
<div class="a" style="left:816px;top:306px;width:235px;height:300px;background:#f0f0f0;border:2px solid;border-color:#a0a0a0 #fff #fff #a0a0a0"></div>
<div class="a" style="left:837px;top:324px;width:99px;height:16px;background:#e4e2e6"></div>
<svg style="left:822px;top:312px" width="9" height="9"><circle cx="4.5" cy="4.5" r="3.6" fill="#e00000"/></svg>
<svg style="left:822px;top:328px" width="9" height="9"><circle cx="4.5" cy="4.5" r="3.6" fill="#007000"/></svg>
<div class="a t" style="left:839px;top:310px;letter-spacing:-0.4px">5' Sliding Glass Door</div>
<div class="a t" style="left:839px;top:326px;letter-spacing:-0.4px">6' Sliding Glass Door</div>
<div class="a" style="left:816px;top:612px;width:235px;height:47px;background:#fff;border-top:1px solid #a0a0a0;border-left:1px solid #a0a0a0"></div>
<div class="a" style="left:859px;top:616px;width:150px;height:40px;background:linear-gradient(to right,#1f4fae 0%,#2060bc 45%,#0c88d6 62%,#1a70c8 78%,#2456b4 100%)"></div>
<div class="a t" style="left:862px;top:618px;font-size:37px;line-height:41px;color:#fff;font-weight:bold;transform:scaleX(0.39);transform-origin:0 0;text-shadow:1px 1px 1px #102060">3D</div>
<div class="a t" style="left:884px;top:618px;font-size:37px;line-height:41px;color:#fff;font-weight:bold;transform:scaleX(0.435);transform-origin:0 0;text-shadow:1px 1px 1px #102060">Home</div>
<div class="a t" style="left:932px;top:618px;font-size:37px;line-height:41px;color:#fff;font-weight:bold;transform:scaleX(0.445);transform-origin:0 0;text-shadow:1px 1px 1px #102060">Architect</div>
<svg style="left:895px;top:616px" width="34" height="15"><polygon points="2,13 14,3 22,3 10,13" fill="#3a2a8a"/><polygon points="15,13 23,4 33,13 29,13 23,8 19,13" fill="#3a2a8a"/><rect x="26" y="2" width="3" height="7" fill="#3a2a8a"/><polygon points="20,13 23,9.5 26,13" fill="#3a2a8a"/></svg>
<div class="a" style="left:816px;top:661px;width:235px;height:151px;background:#f4f4f4;border:1px solid #a0a0a0;border-right-color:#fff;border-bottom-color:#fff"></div>
<svg style="left:0;top:0" width="1058" height="839">
<defs><pattern id="wood" width="3" height="3" patternUnits="userSpaceOnUse"><rect width="3" height="3" fill="#b48c4c"/><rect width="1" height="1" fill="#a48040"/><rect x="2" y="1" width="1" height="1" fill="#c4a060"/><rect x="1" y="2" width="1" height="1" fill="#9c7840"/></pattern></defs>
<polygon points="890,662 893,662 976,689 976,811 971,809 971,692 892,666 892,783 890,783" fill="url(#wood)"/>
<polygon points="892,666 971,692 971,809 892,783" fill="#b0b0b0"/>
<polygon points="892,666 895,667 895,784 892,783" fill="#bcbcbc"/>
<polygon points="897,673 928,683.5 928,783 897,772.5" fill="#c8f0f0"/>
<polygon points="896,672 897,672 897,773 896,772" fill="#d8d8d8"/>
<polygon points="930,684 934,685.5 934,797 930,796" fill="#a4a4a4"/>
<polygon points="937.5,686.5 969,697 969,795.5 937.5,785.5" fill="#c8f0f0"/>
<polygon points="936.5,686 937.5,686.5 937.5,785.5 936.5,785" fill="#d8d8d8"/>
<path d="M902 727.5 L922 734" stroke="#000" stroke-width="1.1"/><path d="M922 732 V736" stroke="#000" stroke-width="1"/>
</svg>
<div class="a" style="left:4px;top:815px;width:1050px;height:1px;background:#a0a0a0"></div>
<div class="a" style="left:4px;top:816px;width:1050px;height:19px;background:#ebe9ec"></div>
<div class="a t" style="left:6px;top:821px;letter-spacing:0.1px">Вставьте или выберите элемент, чтобы редактировать</div>
<div class="a sp" style="left:712px;top:819px;width:56px;color:#000">GRIDSNAP</div>
<div class="a sp" style="left:771px;top:819px;width:50px;color:#000">OBJSNAP</div>
<div class="a sp" style="left:824px;top:819px;width:63px;color:#000">ANGLESNAP</div>
<div class="a sp" style="left:890px;top:819px;width:38px;color:#a0a0a0">CETKA</div>
<div class="a sp" style="left:931px;top:819px;width:41px;color:#a0a0a0">ORTHO</div>
<div class="a sp" style="left:975px;top:819px;width:59px;color:#000">COLLISION</div>
<svg style="left:1040px;top:822px" width="13" height="13"><path d="M12 2 L2 12 M12 6 L6 12 M12 10 L10 12" stroke="#a0a0a0" stroke-width="1.2"/><path d="M12.8 2.8 L2.8 12.8 M12.8 6.8 L6.8 12.8" stroke="#fff" stroke-width="1"/></svg>
<div class="a" style="left:1054px;top:30px;width:4px;height:809px;background:linear-gradient(to left,#2d5bc4 0,#2d5bc4 1px,#6c9ee0 1px,#86b6ee 3px,#2148b0 3px)"></div>
</body></html>
